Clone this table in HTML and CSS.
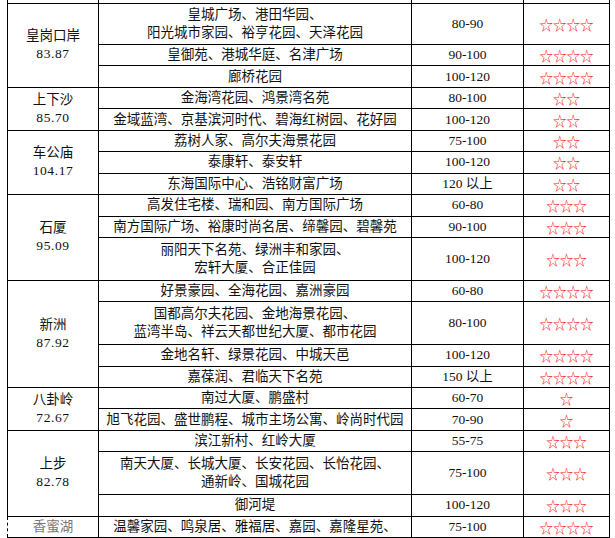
FILE: index.html
```html
<!DOCTYPE html>
<html lang="zh">
<head>
<meta charset="utf-8">
<title>深圳片区房价</title>
<link rel="stylesheet" href="styles.css">
</head>
<body>
<table class="price-table">
  <colgroup>
    <col class="c-district">
    <col class="c-estate">
    <col class="c-size">
    <col class="c-star">
  </colgroup>
  <tbody>
    <tr class="stub"><td></td><td></td><td></td><td></td></tr>

    <tr class="first">
      <td class="district" rowspan="3">皇岗口岸<br><span class="num">83.87</span></td>
      <td>皇城广场、港田华园、<br>阳光城市家园、裕亨花园、天泽花园</td>
      <td>80-90</td>
      <td class="stars">☆☆☆☆</td>
    </tr>
    <tr class="s">
      <td>皇御苑、港城华庭、名津广场</td>
      <td>90-100</td>
      <td class="stars">☆☆☆☆</td>
    </tr>
    <tr class="s">
      <td>廊桥花园</td>
      <td>100-120</td>
      <td class="stars">☆☆☆☆</td>
    </tr>

    <tr class="s">
      <td class="district" rowspan="2">上下沙<br><span class="num">85.70</span></td>
      <td>金海湾花园、鸿景湾名苑</td>
      <td>80-100</td>
      <td class="stars">☆☆</td>
    </tr>
    <tr class="s">
      <td>金域蓝湾、京基滨河时代、碧海红树园、花好园</td>
      <td>100-120</td>
      <td class="stars">☆☆</td>
    </tr>

    <tr class="s">
      <td class="district" rowspan="3">车公庙<br><span class="num">104.17</span></td>
      <td>荔树人家、高尔夫海景花园</td>
      <td>75-100</td>
      <td class="stars">☆☆</td>
    </tr>
    <tr class="s">
      <td>泰康轩、泰安轩</td>
      <td>100-120</td>
      <td class="stars">☆☆</td>
    </tr>
    <tr class="s">
      <td>东海国际中心、浩铭财富广场</td>
      <td>120 以上</td>
      <td class="stars">☆☆</td>
    </tr>

    <tr class="s">
      <td class="district" rowspan="3">石厦<br><span class="num">95.09</span></td>
      <td>高发住宅楼、瑞和园、南方国际广场</td>
      <td>60-80</td>
      <td class="stars">☆☆☆</td>
    </tr>
    <tr class="s">
      <td>南方国际广场、裕康时尚名居、缔馨园、碧馨苑</td>
      <td>90-100</td>
      <td class="stars">☆☆☆</td>
    </tr>
    <tr class="d">
      <td>丽阳天下名苑、绿洲丰和家园、<br>宏轩大厦、合正佳园</td>
      <td>100-120</td>
      <td class="stars">☆☆☆</td>
    </tr>

    <tr class="s">
      <td class="district" rowspan="4">新洲<br><span class="num">87.92</span></td>
      <td>好景豪园、全海花园、嘉洲豪园</td>
      <td>60-80</td>
      <td class="stars">☆☆☆☆</td>
    </tr>
    <tr class="d">
      <td>国都高尔夫花园、金地海景花园、<br>蓝湾半岛、祥云天都世纪大厦、都市花园</td>
      <td>80-100</td>
      <td class="stars">☆☆☆☆</td>
    </tr>
    <tr class="s">
      <td>金地名轩、绿景花园、中城天邑</td>
      <td>100-120</td>
      <td class="stars">☆☆☆☆</td>
    </tr>
    <tr class="s">
      <td>嘉葆润、君临天下名苑</td>
      <td>150 以上</td>
      <td class="stars">☆☆☆☆</td>
    </tr>

    <tr class="s">
      <td class="district" rowspan="2">八卦岭<br><span class="num">72.67</span></td>
      <td>南过大厦、鹏盛村</td>
      <td>60-70</td>
      <td class="stars">☆</td>
    </tr>
    <tr class="s">
      <td>旭飞花园、盛世鹏程、城市主场公寓、岭尚时代园</td>
      <td>70-90</td>
      <td class="stars">☆</td>
    </tr>

    <tr class="s">
      <td class="district dash-bottom" rowspan="3">上步<br><span class="num">82.78</span></td>
      <td>滨江新村、红岭大厦</td>
      <td>55-75</td>
      <td class="stars">☆☆☆</td>
    </tr>
    <tr class="d">
      <td>南天大厦、长城大厦、长安花园、长怡花园、<br>通新岭、国城花园</td>
      <td>75-100</td>
      <td class="stars">☆☆☆</td>
    </tr>
    <tr class="s">
      <td>御河堤</td>
      <td>100-120</td>
      <td class="stars">☆☆☆</td>
    </tr>

    <tr class="s">
      <td class="district faded">香蜜湖</td>
      <td>温馨家园、鸣泉居、雅福居、嘉园、嘉隆星苑、</td>
      <td>75-100</td>
      <td class="stars">☆☆☆☆</td>
    </tr>
  </tbody>
</table>
</body>
</html>
```

FILE: styles.css
```css
html,
body {
  margin: 0;
  padding: 0;
  background: #ffffff;
}

body {
  font-family: "Liberation Serif", "Noto Sans CJK SC", serif;
  font-size: 13.5px;
  color: #111111;
}

.price-table {
  border-collapse: collapse;
  table-layout: fixed;
  width: 602px;
  margin-left: 7px;
}

.c-district { width: 91px; }
.c-estate { width: 313px; }
.c-size { width: 112px; }
.c-star { width: 86px; }

.price-table td {
  border: 1px solid #000000;
  padding: 0;
  text-align: center;
  vertical-align: middle;
  line-height: 18px;
  white-space: nowrap;
}

.stub { height: 3px; }
.stub td { border-top: none; line-height: 0; }

.first { height: 41.5px; }
.s { height: 21.45px; }
.d { height: 42.9px; }

.district {
  line-height: 19.5px;
}

.num {
  letter-spacing: 0.6px;
}

.stars {
  color: #ff2222;
  font-family: "Noto Sans CJK SC", sans-serif;
}

.dash-bottom {
  border-bottom-style: dashed;
}

.price-table td.faded {
  color: #777777;
  border-top-style: dashed;
  border-left-style: dashed;
}
```
